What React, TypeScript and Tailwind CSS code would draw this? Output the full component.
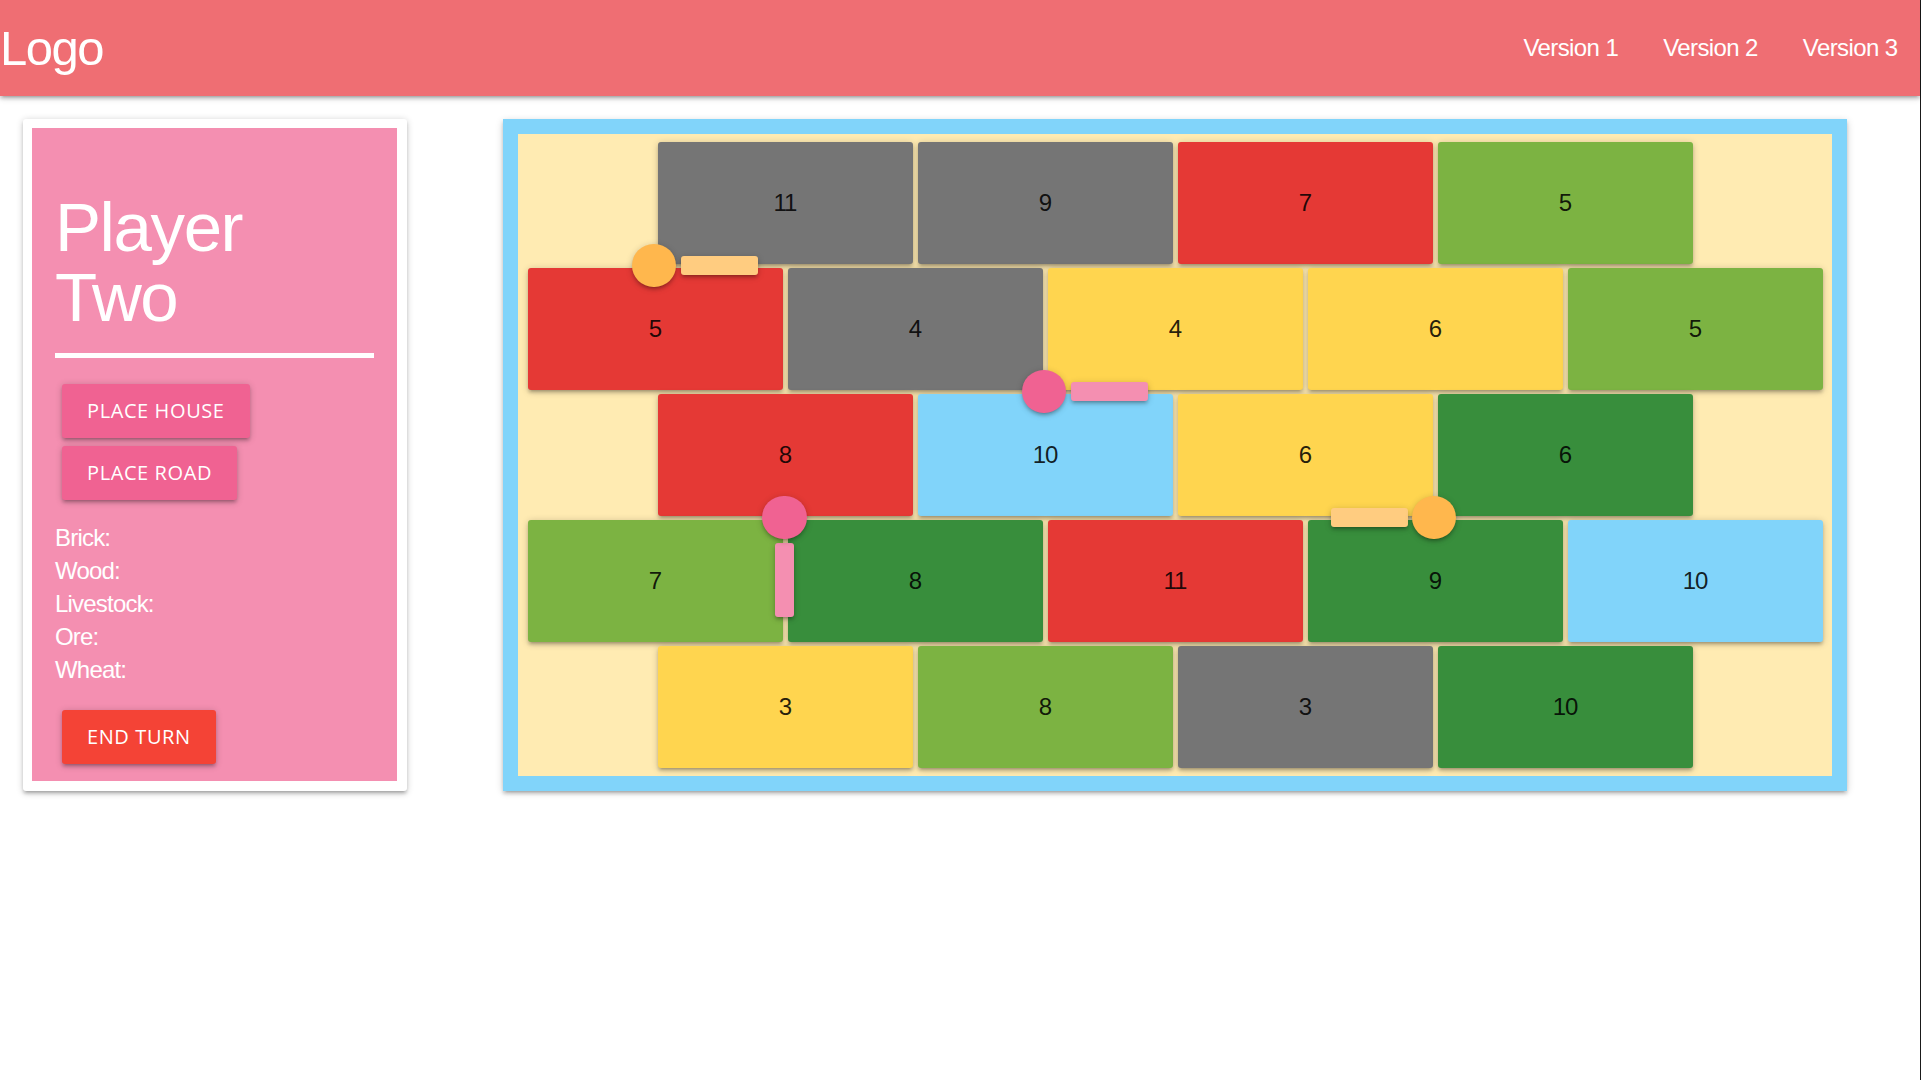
import React from "react";

type Tile = { n: number; c: string };

const GRAY = "bg-[#757575]";
const RED = "bg-[#e53935]";
const LGREEN = "bg-[#7cb342]";
const YELLOW = "bg-[#ffd54f]";
const DGREEN = "bg-[#388e3c]";
const BLUE = "bg-[#81d4fa]";

const rows: Tile[][] = [
  [
    { n: 11, c: GRAY },
    { n: 9, c: GRAY },
    { n: 7, c: RED },
    { n: 5, c: LGREEN },
  ],
  [
    { n: 5, c: RED },
    { n: 4, c: GRAY },
    { n: 4, c: YELLOW },
    { n: 6, c: YELLOW },
    { n: 5, c: LGREEN },
  ],
  [
    { n: 8, c: RED },
    { n: 10, c: BLUE },
    { n: 6, c: YELLOW },
    { n: 6, c: DGREEN },
  ],
  [
    { n: 7, c: LGREEN },
    { n: 8, c: DGREEN },
    { n: 11, c: RED },
    { n: 9, c: DGREEN },
    { n: 10, c: BLUE },
  ],
  [
    { n: 3, c: YELLOW },
    { n: 8, c: LGREEN },
    { n: 3, c: GRAY },
    { n: 10, c: DGREEN },
  ],
];

const shadow =
  "shadow-[0_3px_3px_0_rgba(0,0,0,0.14),0_4px_1.5px_-3px_rgba(0,0,0,0.12),0_1.5px_7.5px_0_rgba(0,0,0,0.2)]";

const sans = "font-['Liberation_Sans',Arial,sans-serif]";
const btnFont = "font-['Open_Sans',sans-serif]";

function Btn({ label, color }: { label: string; color: string }) {
  return (
    <button
      className={`${color} ${btnFont} ${shadow} h-[54px] px-[25px] rounded-[3px] text-white text-[20px] tracking-[0.6px] leading-[54px] uppercase`}
    >
      {label}
    </button>
  );
}

export default function App() {
  return (
    <div className="flex h-[1080px] w-[1921px] bg-white overflow-hidden">
      <div className="w-[1920px] flex flex-col">
        {/* Navbar */}
        <nav
          className={`relative z-10 h-[96px] bg-[#ef6e73] ${shadow} flex items-center justify-between text-white ${sans}`}
        >
          <a className="text-[49px] leading-[96px] tracking-[-1.5px] pl-0">Logo</a>
          <ul className="flex h-full items-center">
            {["Version 1", "Version 2", "Version 3"].map((v) => (
              <li key={v}>
                <a className="block px-[22.5px] text-[24px] leading-[94px] tracking-[-0.6px]">
                  {v}
                </a>
              </li>
            ))}
          </ul>
        </nav>

        {/* Main */}
        <div className="flex items-start pt-[23px]">
          {/* Player card */}
          <div
            className={`ml-[23px] w-[384px] h-[672px] bg-white rounded-[3px] pl-[9px] pt-[9px] pr-[10px] pb-[10px] ${shadow}`}
          >
            <div className="h-full bg-[#f48fb1] px-[23px] pt-[65px] text-white">
              <h3
                className={`${sans} text-[69px] leading-[70px] tracking-[-1.4px]`}
              >
                Player
                <br />
                Two
              </h3>
              <div className="mt-[20px] h-[4.5px] bg-white" />
              <div className="mt-[26px] ml-[7px] flex flex-col items-start gap-[8px]">
                <Btn label="Place House" color="bg-[#f06292]" />
                <Btn label="Place Road" color="bg-[#f06292]" />
              </div>
              <div
                className={`${sans} mt-[21px] text-[24px] leading-[33px] tracking-[-0.8px]`}
              >
                <div>Brick:</div>
                <div>Wood:</div>
                <div>Livestock:</div>
                <div>Ore:</div>
                <div>Wheat:</div>
              </div>
              <div className="mt-[24px] ml-[7px]">
                <Btn label="End Turn" color="bg-[#f44336]" />
              </div>
            </div>
          </div>

          {/* Board */}
          <div
            className={`relative ml-[96px] w-[1344px] h-[672px] bg-[#81d4fa] p-[15px] ${shadow}`}
          >
            <div className="h-full bg-[#ffebb2] py-[8px] flex flex-col gap-[4px]">
              {rows.map((row, i) => (
                <div key={i} className="flex justify-center gap-[5px]">
                  {row.map((t, j) => (
                    <div
                      key={j}
                      className={`${t.c} ${shadow} w-[255px] h-[122px] rounded-[3px] flex items-center justify-center ${sans} text-[24px] tracking-[-1px] text-[rgba(0,0,0,0.87)]`}
                    >
                      {t.n}
                    </div>
                  ))}
                </div>
              ))}
            </div>

            {/* Pieces */}
            <div
              className={`absolute left-[178px] top-[137px] w-[77px] h-[19px] rounded-[3px] bg-[#ffcc80] ${shadow}`}
            />
            <div
              className={`absolute left-[129px] top-[125px] w-[44px] h-[43px] rounded-full bg-[#ffb74d] ${shadow}`}
            />

            <div
              className={`absolute left-[568px] top-[263px] w-[77px] h-[19px] rounded-[3px] bg-[#f48fb1] ${shadow}`}
            />
            <div
              className={`absolute left-[519px] top-[251px] w-[44px] h-[43px] rounded-full bg-[#f06292] ${shadow}`}
            />

            <div
              className={`absolute left-[272px] top-[424px] w-[19px] h-[74px] rounded-[3px] bg-[#f48fb1] ${shadow}`}
            />
            <div
              className={`absolute left-[259px] top-[377px] w-[45px] h-[43px] rounded-full bg-[#f06292] ${shadow}`}
            />

            <div
              className={`absolute left-[828px] top-[389px] w-[77px] h-[19px] rounded-[3px] bg-[#ffcc80] ${shadow}`}
            />
            <div
              className={`absolute left-[909px] top-[377px] w-[44px] h-[43px] rounded-full bg-[#ffb74d] ${shadow}`}
            />
          </div>
        </div>
      </div>
      <div className="w-px h-full bg-[#1a1a1a]" />
    </div>
  );
}
